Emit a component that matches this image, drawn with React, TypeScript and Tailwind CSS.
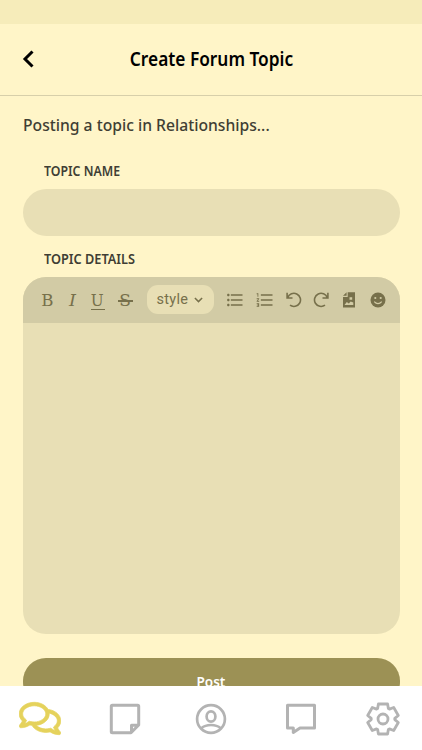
import React from "react";
import { FaRegComments } from "react-icons/fa";
import { MdFormatListBulleted, MdFormatListNumbered } from "react-icons/md";

function Redo({ flip = false }: { flip?: boolean }) {
  return (
    <svg viewBox="0 0 16 16" className={`h-4 w-4 shrink-0 ${flip ? "-scale-x-100" : ""}`} fill="none" stroke="currentColor" strokeWidth="1.6">
      <path d="M14.9 .8v5.2H9.5M14.3 5.6A6.6 6.6 0 1 0 12 13.2" />
    </svg>
  );
}

function Toolbar() {
  return (
    <div className="flex h-[46px] shrink-0 items-center bg-[#d2cba5] text-[#77704b]">
      <div className="ml-[18px] flex w-[14px] justify-center pt-px font-['DejaVu_Serif',serif] text-[17.5px] leading-none"><span className="scale-x-95">B</span></div>
      <div className="ml-[11px] flex w-[14px] justify-center pt-px font-['DejaVu_Serif',serif] text-[17.5px] italic leading-none">I</div>
      <div className="relative ml-[11px] flex w-[14px] justify-center font-['DejaVu_Serif',serif] text-[17px] leading-none">
        <span className="scale-x-90">U</span><i className="absolute top-[17px] left-0 h-[1.5px] w-[14px] bg-[#77704b]" />
      </div>
      <div className="relative ml-[13px] flex w-[15px] justify-center pt-px font-['DejaVu_Serif',serif] text-[17px] leading-none">
        S<i className="absolute top-[9px] left-0 h-[1.5px] w-[15px] bg-[#77704b]" />
      </div>
      <div className="mb-px ml-[14px] flex h-[29px] w-[67px] items-center rounded-[11px] bg-[#e8dfb5] pl-[10px]">
        <span className="font-[Roboto,sans-serif] text-[14.5px] tracking-[0.3px]">style</span>
        <svg viewBox="0 0 10 6" className="ml-[6px] h-[6px] w-[9px]" fill="none" stroke="currentColor" strokeWidth="1.7"><path d="M1 .8l4 4 4-4" /></svg>
      </div>
      <MdFormatListBulleted className="ml-[11px] h-5 w-5 shrink-0" />
      <MdFormatListNumbered className="ml-[10px] h-5 w-5 shrink-0" />
      <div className="ml-[11px]"><Redo flip /></div>
      <div className="ml-[11px]"><Redo /></div>
      <svg viewBox="0 0 12 16" className="ml-[14px] h-4 w-3 shrink-0">
        <path fill="currentColor" d="M4.7.2H12v15.3H0V5h4.7zM0 3.8 3.6.2v3.6z" />
        <path fill="#d2cba5" d="M1.5 13 3.8 10l2 1.4 1.9-1.8 2.6 1v2.4zM6.5 5.3h2.7v2.5H6.5z" />
      </svg>
      <svg viewBox="0 0 16 16" className="ml-[15px] h-4 w-4 shrink-0">
        <circle cx="8" cy="8" r="7.5" fill="currentColor" />
        <circle cx="5.3" cy="6" r="1.1" fill="#d2cba5" /><circle cx="10.7" cy="6" r="1.1" fill="#d2cba5" />
        <path d="M4.2 9.6q3.8 4 7.6 0" fill="none" stroke="#d2cba5" strokeWidth="1.2" />
      </svg>
    </div>
  );
}

const gearPoints = Array.from({ length: 6 }, (_, i) =>
  [[-27, 11.8], [-17, 15.7], [17, 15.7], [27, 11.8]].map(([offset, radius]) => {
    const angle = ((i * 60 - 90 + offset) * Math.PI) / 180;
    return `${(17 + radius * Math.cos(angle)).toFixed(2)},${(18 + radius * Math.sin(angle)).toFixed(2)}`;
  }).join(" "),
).join(" ");

export default function App() {
  return (
    <div className="flex h-[750px] w-[422px] flex-col overflow-hidden bg-[#fff5c8] font-['Noto_Sans',sans-serif] text-[#403e34]">
      <div className="h-[24px] shrink-0 bg-[#f6ecba]" />
      <header className="grid h-[72px] shrink-0 grid-cols-[54px_1fr_54px] items-center border-b border-[#d7cfaa] pb-[2px] text-black">
        <svg viewBox="0 0 12 18" className="ml-[22px] h-[18px] w-3" fill="none" stroke="currentColor" strokeWidth="3"><path d="M10.5 1.5 3 9l7.5 7.5" /></svg>
        <h1 className="ml-px scale-x-[.91] text-center text-[19px] font-semibold leading-6 whitespace-nowrap">Create Forum Topic</h1>
      </header>
      <main className="flex min-h-0 flex-1 flex-col overflow-hidden px-[22.5px]">
        <p className="mt-[17px] h-6 shrink-0 origin-left scale-x-[.95] text-[16.5px] font-medium leading-6 whitespace-nowrap">Posting a topic in Relationships...</p>
        <label className="mt-[24px] ml-[21px] h-5 shrink-0 origin-left scale-x-[.88] text-[14px] font-semibold leading-5">TOPIC NAME</label>
        <div className="mt-[8px] h-[47px] shrink-0 rounded-[23.5px] bg-[#e8dfb5]" />
        <label className="mt-[13px] ml-[21px] h-5 shrink-0 origin-left scale-x-[.91] text-[14px] font-semibold leading-5">TOPIC DETAILS</label>
        <section className="mt-[8px] flex h-[357px] shrink-0 flex-col overflow-hidden rounded-[23px] bg-[#e8dfb5]">
          <Toolbar />
        </section>
        <button className="mt-[24px] h-[47px] shrink-0 rounded-[23px] bg-[#9c9155] text-[14px] font-semibold text-white"><span className="inline-block scale-x-[.97]">Post</span></button>
      </main>
      <nav className="flex h-[64px] shrink-0 items-start bg-white text-[#b3b3b3]">
        <FaRegComments className="mt-[14px] ml-[19px] h-[37px] w-[42px] shrink-0 text-[#e5d25c]" stroke="currentColor" strokeWidth="10" />
        <svg viewBox="0 0 32 32" className="mt-[17px] ml-[48px] h-8 w-8 shrink-0" fill="none" stroke="currentColor" strokeWidth="3" strokeLinejoin="round">
          <path d="M3.3 2.3H28.7Q29.7 2.3 29.7 3.3V22L22 29.7H3.3Q2.3 29.7 2.3 28.7V3.3Q2.3 2.3 3.3 2.3zM29.7 22.3H22.5V29.5" />
        </svg>
        <svg viewBox="0 0 32 32" className="mt-[17px] ml-[54px] h-8 w-8 shrink-0" fill="none" stroke="currentColor" strokeWidth="2.7">
          <circle cx="16" cy="16" r="13.9" /><ellipse cx="16" cy="13.5" rx="4.4" ry="5.2" /><path d="M6.3 25.2Q10 22 16 22t9.7 3.2" />
        </svg>
        <svg viewBox="0 0 32 32" className="mt-[17px] ml-[58px] h-8 w-8 shrink-0" fill="none" stroke="currentColor" strokeWidth="3" strokeLinejoin="round">
          <path d="M3.2 2.3H29.5V25H15L8.3 29.5V25H2.5V2.3z" />
        </svg>
        <svg viewBox="0 0 34 36" className="mt-[15px] ml-[49px] h-9 w-[34px] shrink-0 overflow-visible" fill="none" stroke="currentColor" strokeWidth="2.8" strokeLinejoin="round">
          <polygon points={gearPoints} />
          <circle cx="17" cy="18" r="5" />
        </svg>
      </nav>
    </div>
  );
}
